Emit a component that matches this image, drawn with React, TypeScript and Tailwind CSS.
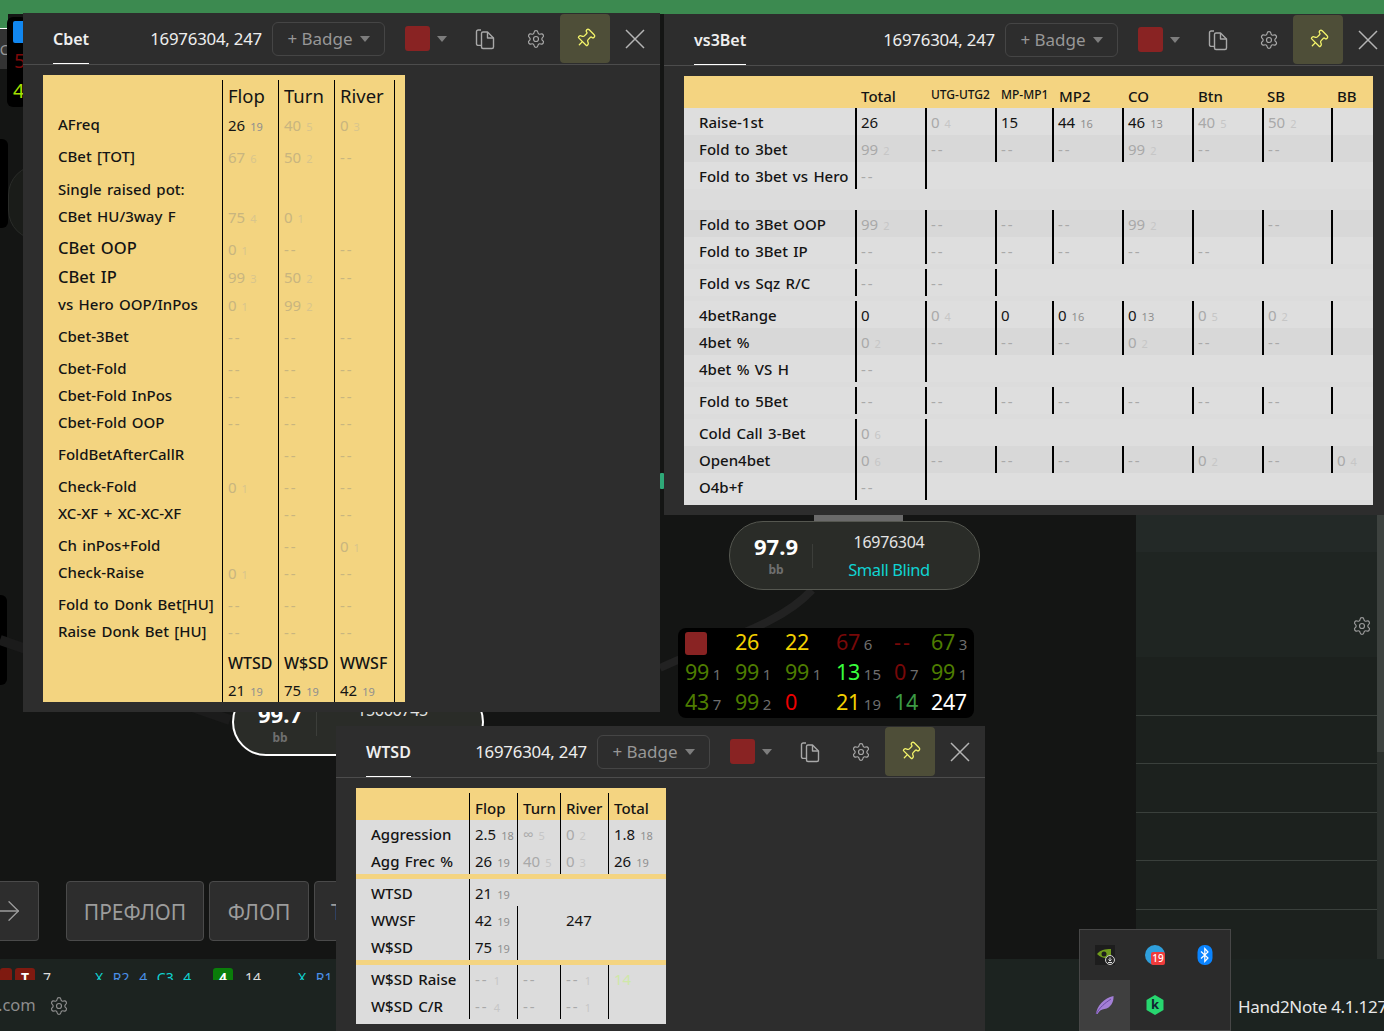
import { ArrowRight, Pin, Settings } from "lucide-react";

const font = "font-['Noto_Sans','Open_Sans',sans-serif]";

type Tone = "yellow" | "grey";

// "!26 19" -> bright value 26 with sample 19, "40 5" -> dimmed, "" -> empty
function Stat({ v, tone }: { v: string; tone: Tone }) {
  if (!v) return null;
  const bright = v.startsWith("!");
  const [main, sub] = v.replace("!", "").split(" ");
  const mainCls = bright
    ? "text-[#141414]"
    : tone === "yellow"
      ? "text-[#c8b57f]"
      : "text-[#a9a9a9]";
  const subCls = bright
    ? "text-[#8f8f8f]"
    : tone === "yellow"
      ? "text-[#d8c58c]"
      : "text-[#c6c6c6]";
  return (
    <span className="whitespace-nowrap">
      <span className={`text-[15px] ${main === "--" ? "tracking-[2px]" : ""} ${mainCls}`}>{main}</span>
      {sub && <span className={`ml-[5px] text-[11px] ${subCls}`}>{sub}</span>}
    </span>
  );
}

const cbetRows: { label: string; big?: boolean; h: string; pad?: string; cells: string[] }[] = [
  { label: "AFreq", h: "h-[27px]", cells: ["!26 19", "40 5", "0 3"] },
  { label: "CBet [TOT]", h: "h-[32px]", pad: "pt-[5px]", cells: ["67 6", "50 2", "--"] },
  { label: "Single raised pot:", h: "h-[33px]", pad: "pt-[5px]", cells: ["", "", ""] },
  { label: "CBet HU/3way F", h: "h-[27px]", cells: ["75 4", "0 1", ""] },
  { label: "CBet OOP", big: true, h: "h-[33px]", pad: "pt-[4px]", cells: ["0 1", "--", "--"] },
  { label: "CBet IP", big: true, h: "h-[28px]", cells: ["99 3", "50 2", "--"] },
  { label: "vs Hero OOP/InPos", h: "h-[27px]", cells: ["0 1", "99 2", ""] },
  { label: "Cbet-3Bet", h: "h-[32px]", pad: "pt-[5px]", cells: ["--", "--", "--"] },
  { label: "Cbet-Fold", h: "h-[32px]", pad: "pt-[5px]", cells: ["--", "--", "--"] },
  { label: "Cbet-Fold InPos", h: "h-[27px]", cells: ["--", "--", "--"] },
  { label: "Cbet-Fold OOP", h: "h-[27px]", cells: ["--", "--", "--"] },
  { label: "FoldBetAfterCallR", h: "h-[32px]", pad: "pt-[5px]", cells: ["", "--", "--"] },
  { label: "Check-Fold", h: "h-[32px]", pad: "pt-[5px]", cells: ["0 1", "--", "--"] },
  { label: "XC-XF + XC-XC-XF", h: "h-[27px]", cells: ["", "--", "--"] },
  { label: "Ch inPos+Fold", h: "h-[32px]", pad: "pt-[5px]", cells: ["", "--", "0 1"] },
  { label: "Check-Raise", h: "h-[27px]", cells: ["0 1", "--", "--"] },
  { label: "Fold to Donk Bet[HU]", h: "h-[32px]", pad: "pt-[5px]", cells: ["--", "--", "--"] },
  { label: "Raise Donk Bet [HU]", h: "h-[27px]", cells: ["--", "--", "--"] },
];

const labelText = "font-medium [word-spacing:1.5px]";

function CbetTable() {
  const cols = "grid grid-cols-[179px_56px_56px_60px_11px] items-stretch";
  const line = "border-l border-black pl-[5px] flex items-center";
  return (
    <div className="ml-[20px] mt-[10px] h-[627px] w-[362px] bg-[#f3d480] pt-[5px] text-[#141414]">
      <div className={`${cols} h-[31px] text-[18.5px]`}>
        <div />
        <div className={`${line} pt-[1px]`}>Flop</div>
        <div className={`${line} pt-[1px]`}>Turn</div>
        <div className={`${line} pt-[1px]`}>River</div>
        <div className="border-l border-black" />
      </div>
      {cbetRows.map((r) => (
        <div key={r.label} className={`${cols} ${r.h}`}>
          <div className={`flex items-center pl-[15px] ${r.pad ?? ""} ${labelText} ${r.big ? "text-[16.5px]" : "text-[15px]"}`}>
            {r.label}
          </div>
          {r.cells.map((c, i) => (
            <div key={i} className={`${line} ${r.pad ?? ""}`}>
              <Stat v={c} tone="yellow" />
            </div>
          ))}
          <div className="border-l border-black" />
        </div>
      ))}
      <div className={`${cols} h-[32px] text-[16px] font-medium`}>
        <div />
        <div className={`${line} pt-[4px]`}>WTSD</div>
        <div className={`${line} pt-[4px]`}>W$SD</div>
        <div className={`${line} pt-[4px]`}>WWSF</div>
        <div className="border-l border-black" />
      </div>
      <div className={`${cols} h-[25px]`}>
        <div />
        <div className={line}><Stat v="!21 19" tone="yellow" /></div>
        <div className={line}><Stat v="!75 19" tone="yellow" /></div>
        <div className={line}><Stat v="!42 19" tone="yellow" /></div>
        <div className="border-l border-black" />
      </div>
    </div>
  );
}

const all = [1, 1, 1, 1, 1, 1, 1, 1];
const two = [1, 1, 0, 0, 0, 0, 0, 0];

const vsRows: { label: string; lines: number[]; cells: string[]; cls?: string; shade?: boolean }[] = [
  { label: "Raise-1st", lines: all, cells: ["!26", "0 4", "!15", "!44 16", "!46 13", "40 5", "50 2", ""] },
  { label: "Fold to 3bet", lines: all, shade: true, cells: ["99 2", "--", "--", "--", "99 2", "--", "--", ""] },
  { label: "Fold to 3bet vs Hero", lines: two, cells: ["--"] },
  { label: "Fold to 3Bet OOP", lines: all, cls: "mt-[21px]", shade: true, cells: ["99 2", "--", "--", "--", "99 2", "", "--", ""] },
  { label: "Fold to 3Bet IP", lines: all, cells: ["--", "--", "--", "--", "--", "--", "", ""] },
  { label: "Fold vs Sqz R/C", lines: [1, 1, 1, 0, 0, 0, 0, 0], cls: "mt-[5px]", cells: ["--", "--"] },
  { label: "4betRange", lines: all, cls: "mt-[5px]", cells: ["!0", "0 4", "!0", "!0 16", "!0 13", "0 5", "0 2", ""] },
  { label: "4bet %", lines: all, shade: true, cells: ["0 2", "--", "--", "--", "0 2", "--", "--", ""] },
  { label: "4bet % VS H", lines: two, cells: ["--"] },
  { label: "Fold to 5Bet", lines: all, cls: "mt-[5px]", cells: ["--", "--", "--", "--", "--", "--", "--", ""] },
  { label: "Cold Call 3-Bet", lines: two, cls: "mt-[5px]", cells: ["0 6"] },
  { label: "Open4bet", lines: all, shade: true, cells: ["0 6", "--", "--", "--", "--", "0 2", "--", "0 4"] },
  { label: "O4b+f", lines: two, cells: ["--"] },
];

function Vs3BetTable() {
  const cols = "grid grid-cols-[171px_70px_70px_57px_70px_70px_70px_69px_42px]";
  const heads: [string, string][] = [
    ["Total", "text-[15px] pl-[6px]"],
    ["UTG-UTG2", "text-[12px] pl-[6px] pb-[3px]"],
    ["MP-MP1", "text-[12px] pl-[6px] pb-[3px]"],
    ["MP2", "text-[15px] pl-[7px]"],
    ["CO", "text-[15px] pl-[6px]"],
    ["Btn", "text-[15px] pl-[6px]"],
    ["SB", "text-[15px] pl-[5px]"],
    ["BB", "text-[15px] pl-[6px]"],
  ];
  return (
    <div className="ml-[20px] mt-[10px] h-[429px] w-[689px] bg-[#dcdcdc] text-[#141414]">
      <div className={`${cols} h-[32px] items-end bg-[#f4d481] pb-[1px] font-medium`}>
        <div />
        {heads.map(([t, c]) => (
          <div key={t} className={c}>{t}</div>
        ))}
      </div>
      {vsRows.map((r) => (
        <div key={r.label} className={`${cols} h-[27px] ${r.cls ?? ""} ${r.shade ? "bg-[#d8d8d8]" : "bg-[#dedede]"}`}>
          <div className={`flex items-center pl-[15px] pt-[2px] text-[15px] ${labelText}`}>{r.label}</div>
          {r.lines.map((on, i) => (
            <div key={i} className={`flex items-center pl-[4px] pt-[1px] ${on ? "border-l-2 border-black" : ""}`}>
              <Stat v={r.cells[i] ?? ""} tone="grey" />
            </div>
          ))}
        </div>
      ))}
    </div>
  );
}

const wtsdBottom = [
  { label: "W$SD Raise", cells: ["-- 1", "--", "-- 1", "14"] },
  { label: "W$SD C/R", cells: ["-- 4", "--", "-- 1", ""] },
];

function WtsdTable() {
  const cols = "grid grid-cols-[113px_48px_43px_48px_58px]";
  const cell = "flex items-center pl-[5px] pt-[1px] border-l border-black";
  const label = `flex items-center pl-[15px] pt-[2px] text-[15px] ${labelText}`;
  return (
    <div className="ml-[20px] mt-[10px] h-[236px] w-[310px] bg-[#dcdcdc] text-[#141414]">
      <div className="bg-[#f4d481] pt-[5px]">
        <div className={`${cols} h-[27px] text-[15px] font-medium`}>
          <div />
          {["Flop", "Turn", "River", "Total"].map((t) => (
            <div key={t} className={`${cell} pt-[3px]`}>{t}</div>
          ))}
        </div>
      </div>
      {[
        { label: "Aggression", cells: ["!2.5 18", "∞ 5", "0 2", "!1.8 18"] },
        { label: "Agg Frec %", cells: ["!26 19", "40 5", "0 3", "!26 19"] },
      ].map((r) => (
        <div key={r.label} className={`${cols} h-[27px]`}>
          <div className={label}>{r.label}</div>
          {r.cells.map((c, i) => (
            <div key={i} className={cell}><Stat v={c} tone="grey" /></div>
          ))}
        </div>
      ))}
      <div className="h-[5px] bg-[#f4d481]" />
      <div className={`${cols} h-[27px]`}>
        <div className={label}>WTSD</div>
        <div className={cell}><Stat v="!21 19" tone="grey" /></div>
      </div>
      <div className={`${cols} h-[27px]`}>
        <div className={label}>WWSF</div>
        <div className={cell}><Stat v="!42 19" tone="grey" /></div>
        <div className="border-l border-black" />
        <div className="flex items-center whitespace-nowrap pl-[6px] pt-[1px] text-[15px]">247</div>
      </div>
      <div className={`${cols} h-[27px]`}>
        <div className={label}>W$SD</div>
        <div className={cell}><Stat v="!75 19" tone="grey" /></div>
        <div className="border-l border-black" />
      </div>
      <div className="h-[5px] bg-[#f4d481]" />
      {wtsdBottom.map((r) => (
        <div key={r.label} className={`${cols} h-[27px]`}>
          <div className={label}>{r.label}</div>
          {r.cells.map((c, i) =>
            c === "14" ? (
              <div key={i} className={`${cell} text-[15px] text-[#cfe8a8]`}>14</div>
            ) : (
              <div key={i} className={cell}><Stat v={c} tone="grey" /></div>
            ),
          )}
        </div>
      ))}
    </div>
  );
}

function CopyIcon() {
  return (
    <svg width="20" height="22" viewBox="0 0 20 22" fill="none" stroke="#a8a8a8" strokeWidth="1.4" strokeLinejoin="round">
      <path d="M6 2H3.2A1.7 1.7 0 0 0 1.5 3.7v12a1.7 1.7 0 0 0 1.7 1.7H6" />
      <path d="M6.500 5.500A1.500 1.500 0 0 1 8 4h4.500l6 6v9a1.500 1.500 0 0 1-1.500 1.500H8A1.500 1.500 0 0 1 6.500 19z" />
      <path d="M12.500 4v6h6" />
    </svg>
  );
}

function CloseIcon() {
  return (
    <svg width="20" height="20" viewBox="0 0 20 20" stroke="#b4b4b4" strokeWidth="1.5" className="ml-[15px]">
      <path d="M1 1l18 18M19 1 1 19" />
    </svg>
  );
}

function Caret() {
  return <span className="h-0 w-0 border-x-[5px] border-t-[6px] border-x-transparent border-t-[#7d7d7d]" />;
}

function HudWindow({ title, className, children }: { title: string; className: string; children: React.ReactNode }) {
  return (
    <div className={`absolute bg-[#2d2d2d] ${className}`}>
      <div className="flex h-[52px] items-center justify-between border-b border-[#4c4c4c] pl-[30px] pr-[15px]">
        <div className="relative flex h-[51px] items-center text-[16px] font-semibold text-[#efefef]">
          {title}
          <span className="absolute inset-x-0 bottom-0 h-px bg-white" />
        </div>
        <div className="flex h-[51px] items-center">
          <span className="whitespace-nowrap pt-[1px] text-[16.8px] tracking-[-0.2px] text-[#ededed]">16976304, 247</span>
          <div className="ml-[10px] flex h-[34px] w-[113px] items-center justify-center gap-[7px] rounded-[6px] border border-[#454545] text-[17px] text-[#979797]">
            + Badge
            <Caret />
          </div>
          <span className="ml-[20px] h-[25px] w-[25px] rounded-[3px] bg-[#892323]" />
          <span className="ml-[7px] mr-[28px] flex"><Caret /></span>
          <CopyIcon />
          <Settings size={20} strokeWidth={1.4} className="ml-[31px] text-[#a8a8a8]" />
          <div className="ml-[14px] flex h-[49px] w-[50px] items-center justify-center rounded-[4px] bg-[#4e4e38]">
            <Pin size={21} strokeWidth={1.5} className="rotate-45 text-[#f3f36a]" />
          </div>
          <CloseIcon />
        </div>
      </div>
      {children}
    </div>
  );
}

function SeatPill({ className, stack, name, seat }: { className: string; stack: string; name: string; seat?: string }) {
  return (
    <div className={`absolute flex rounded-[34px] bg-[#2a2c28] ${className}`}>
      <div className="flex w-[82px] flex-col items-center pl-[10px] pt-[9px]">
        <span className="text-[22px] font-bold leading-[30px] text-white">{stack}</span>
        <span className="mt-[2px] text-[12px] font-bold leading-[14px] text-[#6f6f6f]">bb</span>
      </div>
      <div className="mt-[22px] h-[24px] w-px bg-[#3c3e3a]" />
      <div className="flex flex-1 flex-col items-center pr-[14px] pt-[8px]">
        <span className="text-[16px] leading-[24px] tracking-[-0.3px] text-[#e4e4e4]">{name}</span>
        {seat && <span className="mt-[4px] text-[16.5px] leading-[24px] tracking-[-0.4px] text-[#10d3d3]">{seat}</span>}
      </div>
    </div>
  );
}

const hudCells: [string, string, string?][] = [
  ["", ""],
  ["26", "text-[#f2d000]"],
  ["22", "text-[#f2d000]"],
  ["67", "text-[#780808]", "6"],
  ["--", "text-[#780808]"],
  ["67", "text-[#4e7d00]", "3"],
  ["99", "text-[#4e7d00]", "1"],
  ["99", "text-[#4e7d00]", "1"],
  ["99", "text-[#4e7d00]", "1"],
  ["13", "text-[#39ff3c]", "15"],
  ["0", "text-[#780808]", "7"],
  ["99", "text-[#4e7d00]", "1"],
  ["43", "text-[#4e7d00]", "7"],
  ["99", "text-[#4e7d00]", "2"],
  ["0", "text-[#ee0000]"],
  ["21", "text-[#f2d000]", "19"],
  ["14", "text-[#3c9a44]"],
  ["247", "text-white"],
];

function PlayerHud() {
  return (
    <div className="absolute left-[678px] top-[628px] grid h-[90px] w-[296px] grid-cols-[50px_50px_51px_58px_37px_43px] grid-rows-3 rounded-[8px] bg-black pl-[7px]">
      {hudCells.map(([v, c, s], i) =>
        i === 0 ? (
          <div key={i} className="flex items-center">
            <span className="h-[23px] w-[22px] rounded-[3px] bg-[#892323]" />
          </div>
        ) : (
          <div key={i} className="flex items-baseline whitespace-nowrap">
            <span className={`text-[21.5px] leading-[28px] tracking-[-0.4px] ${v === "--" ? "tracking-[2px]" : ""} ${c}`}>{v}</span>
            {s && <span className="ml-[4px] text-[15px] leading-[20px] text-[#6e6e6e]">{s}</span>}
          </div>
        ),
      )}
    </div>
  );
}

function TrayPopup() {
  return (
    <div className="absolute left-[1079px] top-[929px] grid h-[102px] w-[152px] grid-cols-3 grid-rows-2 border border-[#474747] bg-[#2b2b2b]">
      <div className="flex items-center justify-center">
        <svg width="20" height="20" viewBox="0 0 20 20">
          <rect width="20" height="20" fill="#1d1d1d" />
          <path d="M2 9c3-4 8-5 14-5v9c-5 1-10 0-14-4z" fill="#6f9a1c" />
          <circle cx="9" cy="9" r="2.500" fill="#1d1d1d" />
          <circle cx="15" cy="15" r="4.500" fill="#2b2b2b" stroke="#d0d0d0" />
          <path d="M15 12.500v3M13.500 14.500 15 16l1.500-1.500M13 17.500h4" stroke="#e0e0e0" fill="none" />
        </svg>
      </div>
      <div className="relative flex items-center justify-center">
        <span className="h-[20px] w-[20px] rounded-full bg-[#2f9fdc]" />
        <span className="absolute left-[21px] top-[22px] flex h-[13px] w-[14px] items-center justify-center rounded-[2px] bg-[#ee3b3b] text-[10px] font-medium text-white">
          19
        </span>
      </div>
      <div className="flex items-center justify-center">
        <svg width="16" height="20" viewBox="0 0 16 20">
          <rect width="15" height="20" x="0.500" rx="7" fill="#0a84ff" />
          <path d="M4 6.500 11 13l-3.200 3.500v-13L11 7l-7 6.500" fill="none" stroke="#fff" strokeWidth="1.200" />
        </svg>
      </div>
      <div className="flex items-center justify-center bg-[#3f3f3f]">
        <svg width="20" height="20" viewBox="0 0 20 20">
          <path d="M1 19C2 11 9 3 18.500 1c.5 6-3 12-9 13-3 .4-5 1.500-7 5z" fill="#a37fd6" />
          <path d="M1 19C5 12 10 8 16 4" stroke="#6d4aa6" fill="none" />
        </svg>
      </div>
      <div className="flex items-center justify-center">
        <div className="relative h-[20px] w-[18px]">
          <svg width="18" height="20" viewBox="0 0 18 20" className="absolute inset-0">
            <path d="M9 0l8.500 5v10L9 20 .5 15V5z" fill="#27d66f" />
          </svg>
          <span className="absolute inset-0 flex items-center justify-center text-[13px] font-bold text-[#123]">k</span>
        </div>
      </div>
    </div>
  );
}

export default function App() {
  return (
    <div className={`relative h-[1031px] w-[1384px] overflow-hidden bg-[#141514] ${font}`}>
      {/* poker client behind the popups */}
      <div className="absolute inset-x-0 top-0 h-[14px] bg-[#3c8a50]" />
      <div className="absolute left-0 top-[14px] h-[14px] w-[8px] bg-[#3c8a50]" />
      <div className="absolute left-0 top-[28px] h-px w-[8px] bg-white" />
      <div className="absolute left-0 top-[29px] h-[40px] w-[8px] overflow-hidden bg-[#333]">
        <span className="absolute left-[-5px] top-[12px] text-[14px] leading-[18px] text-[#999]">IC</span>
      </div>
      <div className="absolute left-[7px] top-[17px] h-[90px] w-[20px] rounded-[6px] bg-black">
        <div className="ml-[6px] mt-[4px] h-[22px] w-[14px] rounded-[2px] bg-[#1187f0]" />
        <div className="ml-[7px] mt-[4px] text-[20px] leading-[28px] text-[#7d0909]">5</div>
        <div className="ml-[6px] mt-[2px] text-[20px] leading-[28px] text-[#a5e000]">4</div>
      </div>
      <div className="absolute left-0 top-[139px] h-[89px] w-[8px] rounded-r-[6px] bg-black" />
      <div className="absolute left-0 top-[595px] h-[90px] w-[7px] rounded-r-[6px] bg-black" />
      <div className="absolute left-[8px] top-[165px] h-[75px] w-[60px] rounded-full border border-[#2a2c29] bg-[#1a1c19]" />
      <div className="absolute left-[660px] top-[473px] h-[16px] w-[4px] rounded-[1px] bg-[#2fa878]" />

      <svg className="absolute left-0 top-0" width="1136" height="980" fill="none">
        <path d="M660 668C720 640 780 625 812 590" stroke="#222" strokeWidth="8" />
        <path d="M0 640 230 720" stroke="#1b1b1b" strokeWidth="10" />
        <path d="M1006 978l4 3 4-3" stroke="#8d8d8d" strokeWidth="1.200" />
      </svg>

      <div className="absolute left-[814px] top-[515px] h-[6px] w-[89px] bg-[#6a6a6a]" />
      <SeatPill className="left-[729px] top-[521px] h-[69px] w-[251px] border border-[#555750]" stack="97.9" name="16976304" seat="Small Blind" />
      <SeatPill className="left-[232px] top-[688px] h-[68px] w-[252px] border-2 border-white" stack="99.7" name="15666745" />
      <PlayerHud />

      {/* right side panel */}
      <div className="absolute left-[1136px] top-[515px] flex h-[465px] w-[248px] flex-col bg-[#1c211e]">
        <div className="h-[37px] bg-[#232927]" />
        <div className="h-[105px] bg-[#1f2522]" />
        <div className="h-[59px] border-b border-[#3a403c]" />
        <div className="h-[48px] border-b border-[#3a403c]" />
        <div className="h-[49px] border-b border-[#3a403c]" />
        <div className="h-[48px] border-b border-[#3a403c]" />
        <div className="h-[49px] border-b border-[#3a403c]" />
      </div>
      <Settings size={20} strokeWidth={1.4} className="absolute left-[1352px] top-[616px] text-[#9a9a9a]" />
      <div className="absolute left-[1377px] top-[515px] h-[465px] w-[7px] bg-[#2c312e]">
        <div className="h-[237px] bg-[#3d423f]" />
      </div>

      {/* street buttons */}
      <div className="absolute left-0 top-[881px] flex h-[60px] w-full gap-[5px] text-[21px] text-[#9c9c9c]">
        <div className="flex w-[39px] items-center overflow-hidden rounded-r-[4px] border border-l-0 border-[#4a4a4a] bg-[#2d2d2d]">
          <ArrowRight size={32} strokeWidth={1} className="ml-[-7px] shrink-0" />
        </div>
        <div className="ml-[22px] flex w-[138px] items-center justify-center rounded-[4px] border border-[#4a4a4a] bg-[#2d2d2d] pt-[3px]">ПРЕФЛОП</div>
        <div className="flex w-[100px] items-center justify-center rounded-[4px] border border-[#4a4a4a] bg-[#2d2d2d] pt-[3px]">ФЛОП</div>
        <div className="flex w-[60px] items-center rounded-[4px] border border-[#4a4a4a] bg-[#2d2d2d] pl-[16px] pt-[3px]">Т</div>
      </div>

      {/* hand history strip and status bar */}
      <div className="absolute inset-x-0 top-[959px] h-[21px] overflow-hidden bg-[#1c2320]">
        <div className="absolute left-0 top-[9px] h-[16px] w-[12px] rounded-[3px] bg-[#7f1a10]" />
        <div className="absolute left-[15px] top-[9px] h-[16px] w-[20px] rounded-[3px] bg-[#7f1a10] text-center text-[14px] font-bold leading-[20px] text-white">T</div>
        <span className="absolute left-[43px] top-[9px] text-[14px] leading-[20px] text-[#ddd]">7</span>
        <span className="absolute left-[95px] top-[9px] whitespace-nowrap text-[14px] leading-[20px] text-[#10d3d3] [word-spacing:6px]">
          X <span className="text-[#4a90e8]">R2 4</span> C3 4
        </span>
        <div className="absolute left-[213px] top-[9px] h-[16px] w-[20px] rounded-[3px] bg-[#0a7d0a] text-center text-[14px] font-bold leading-[20px] text-white">4</div>
        <span className="absolute left-[245px] top-[9px] text-[14px] leading-[20px] text-[#ddd]">14</span>
        <span className="absolute left-[298px] top-[9px] whitespace-nowrap text-[14px] leading-[20px] text-[#10d3d3] [word-spacing:6px]">
          X <span className="text-[#4a90e8]">R1</span>
        </span>
      </div>
      <div className="absolute inset-x-0 top-[980px] flex h-[51px] items-center bg-[#1c2320] text-[#8d8d8d]">
        <span className="ml-[-2px] text-[16.5px]">.com</span>
        <Settings size={20} strokeWidth={1.4} className="ml-[13px]" />
      </div>
      <span className="absolute left-[1238px] top-[994px] whitespace-nowrap text-[17px] leading-[26px] tracking-[-0.3px] text-[#e8e8e8]">
        Hand2Note 4.1.127
      </span>

      <HudWindow title="Cbet" className="left-[23px] top-[13px] h-[699px] w-[637px]">
        <CbetTable />
      </HudWindow>
      <HudWindow title="vs3Bet" className="left-[664px] top-[14px] h-[501px] w-[729px]">
        <Vs3BetTable />
      </HudWindow>
      <HudWindow title="WTSD" className="left-[336px] top-[726px] h-[305px] w-[649px]">
        <WtsdTable />
      </HudWindow>
      <TrayPopup />
    </div>
  );
}
